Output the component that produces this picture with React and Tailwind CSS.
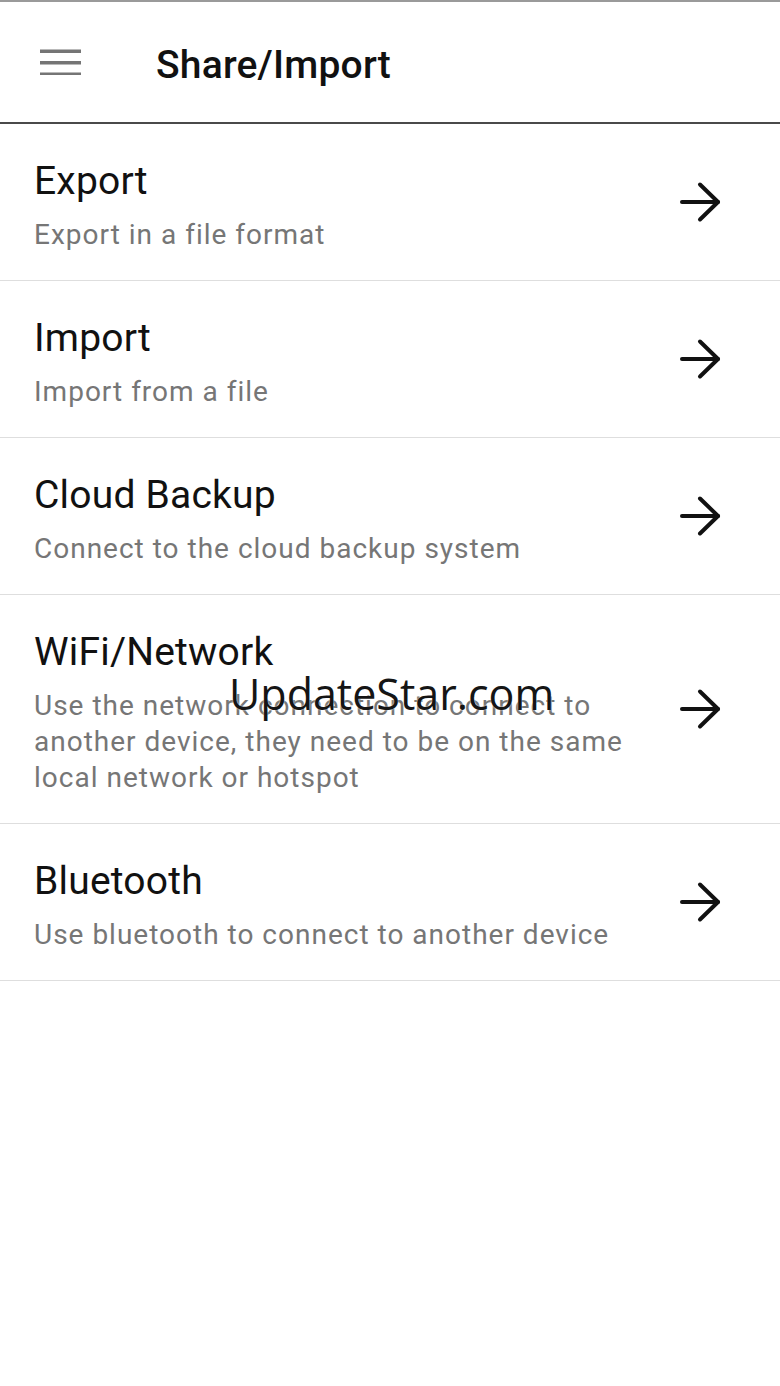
import React from 'react';

// Entradas de la lista de compartir/importar
const items = [
  { id: 'export', title: 'Export', subtitle: 'Export in a file format' },
  { id: 'import', title: 'Import', subtitle: 'Import from a file' },
  { id: 'cloud', title: 'Cloud Backup', subtitle: 'Connect to the cloud backup system' },
  {
    id: 'wifi',
    title: 'WiFi/Network',
    subtitle: 'Use the network connection to connect to another device, they need to be on the same local network or hotspot',
  },
  { id: 'bluetooth', title: 'Bluetooth', subtitle: 'Use bluetooth to connect to another device' },
];

const MenuIcon = () => (
  <svg width="42" height="26" viewBox="0 0 42 26" fill="#757575">
    <rect x="0" y="0.5" width="41" height="3.5" />
    <rect x="0" y="12" width="41" height="3.5" />
    <rect x="0" y="23.5" width="41" height="3.5" />
  </svg>
);

const ArrowIcon = () => (
  <svg width="44" height="44" viewBox="0 0 44 44" fill="none" stroke="#111" strokeWidth="4" strokeLinecap="round" strokeLinejoin="round">
    <path d="M4 22h36" />
    <path d="M22 4.5 40 22 22 39.5" />
  </svg>
);

function App() {
  return (
    <div className="relative min-h-screen bg-white font-['Roboto',sans-serif]">
      <header className="flex items-center h-[124px] border-t-2 border-t-[#9a9a9a] border-b-2 border-b-[#4a4a4a]">
        <div className="ml-[40px] flex items-center">
          <MenuIcon />
        </div>
        <h1 className="ml-[74px] pt-[6px] text-[39px] leading-[46px] tracking-[0.2px] font-medium text-[#111]">Share/Import</h1>
      </header>

      <ul>
        {items.map((item) => (
          <li key={item.id} className="flex items-center border-b border-[#dedede]">
            <div className="flex-1 pl-[34px] pt-[34px] pb-[27px] pr-[10px]">
              <div className="text-[39px] leading-[46px] tracking-[0.2px] text-[#111]">{item.title}</div>
              <div className="mt-[13px] text-[28px] leading-[36px] tracking-[1px] text-[#767676] max-w-[620px]">{item.subtitle}</div>
            </div>
            <div className="pr-[58px] pl-[20px] flex items-center">
              <ArrowIcon />
            </div>
          </li>
        ))}
      </ul>

      {/* marca de agua */}
      <div className="absolute left-[229px] top-[672px] text-[43px] leading-[44px] text-[#151515] font-['Open_Sans',sans-serif] [text-shadow:0_0_2px_#fff]">
        UpdateStar.com
      </div>
    </div>
  );
}

export default App;
